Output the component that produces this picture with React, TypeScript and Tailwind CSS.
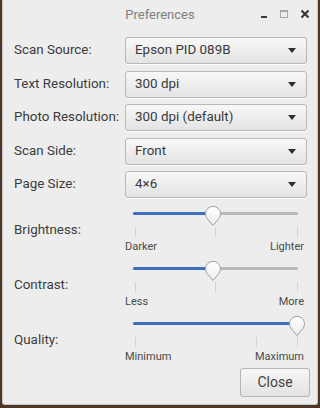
import React from 'react';

const font = { fontFamily: 'Roboto, "Liberation Sans", sans-serif' };

function Combo({ value }: { value: string }) {
  return (
    <div className="flex h-[27px] w-[182px] items-center justify-between rounded-[3px] border border-[#b8b8b8] bg-gradient-to-b from-[#f8f8f8] to-[#e3e3e3] pl-[9px] pr-[10px] text-[13.4px] text-[#3a3a3a] shadow-[0_1px_0_rgba(255,255,255,0.8)]">
      <span>{value}</span>
      <svg width="8" height="5" viewBox="0 0 8 5">
        <path d="M0 0 H8 L4 5 Z" fill="#2e2e2e" />
      </svg>
    </div>
  );
}

function Slider({ value, ticks, low, high }: { value: number; ticks: number[]; low: string; high: string }) {
  return (
    <div className="relative h-[50px] w-[182px]">
      {/* track */}
      <div className="absolute left-[8px] right-[9px] top-[7px] h-[3px] rounded-full bg-[#b9b9b9]" />
      <div
        className="absolute left-[8px] top-[7px] h-[3px] rounded-full bg-[#3f6fc0]"
        style={{ width: `${value * 164}px` }}
      />
      {ticks.map((t) => (
        <div
          key={t}
          className="absolute top-[22px] h-[10px] w-px bg-[#d2d2d2]"
          style={{ left: `${t}px` }}
        />
      ))}
      {/* thumb */}
      <svg
        className="absolute top-[0px]"
        style={{ left: `${8 + value * 164 - 9}px` }}
        width="18"
        height="22"
        viewBox="0 0 18 22"
      >
        <defs>
          <linearGradient id={`g-${low}`} x1="0" y1="0" x2="0" y2="1">
            <stop offset="0" stopColor="#ffffff" />
            <stop offset="1" stopColor="#ececec" />
          </linearGradient>
        </defs>
        <path
          d="M9 20.5 L3.2 13.6 A7.5 7.5 0 1 1 14.8 13.6 Z"
          fill={`url(#g-${low})`}
          stroke="#9f9f9f"
          strokeWidth="1"
        />
      </svg>
      <div className="absolute left-0 right-[3px] top-[34px] flex justify-between text-[11px] text-[#4a4a4a]">
        <span>{low}</span>
        <span>{high}</span>
      </div>
    </div>
  );
}

export default function App() {
  const combos = [
    ['Scan Source:', 'Epson PID 089B'],
    ['Text Resolution:', '300 dpi'],
    ['Photo Resolution:', '300 dpi (default)'],
    ['Scan Side:', 'Front'],
    ['Page Size:', '4×6'],
  ];
  const sliders = [
    { label: 'Brightness:', value: 0.49, ticks: [10, 90, 172], low: 'Darker', high: 'Lighter' },
    { label: 'Contrast:', value: 0.49, ticks: [10, 90, 172], low: 'Less', high: 'More' },
    { label: 'Quality:', value: 1, ticks: [10, 131, 172], low: 'Minimum', high: 'Maximum' },
  ];

  return (
    <div className="h-[408px] w-[320px] bg-[#4b3628] px-[2px] pb-[3px]" style={font}>
      <div className="flex h-full flex-col rounded-b-[3px] border border-t-0 border-[#c9c9c9] bg-[#ededed]">
        {/* Title bar */}
        <div className="relative flex h-[30px] items-center justify-center">
          <span className="text-[13px] text-[#808080]">Preferences</span>
          <div className="absolute right-[7px] top-[8px] flex items-center gap-[12px]">
            <svg width="8" height="12" viewBox="0 0 8 12">
              <rect x="1" y="8" width="6" height="2" fill="#3a3a3a" />
            </svg>
            <svg width="8" height="12" viewBox="0 0 8 12">
              <rect x="0.5" y="2.5" width="7" height="7" fill="none" stroke="#a8a8a8" />
              <rect x="0.5" y="2.5" width="7" height="1.5" fill="#a8a8a8" />
            </svg>
            <svg width="10" height="12" viewBox="0 0 10 12">
              <path d="M1.5 2.5 L8.5 9.5 M8.5 2.5 L1.5 9.5" stroke="#333" strokeWidth="2" />
            </svg>
          </div>
        </div>

        <div className="flex flex-col pl-[11px] pr-[10px] pt-[7px]">
          <div className="flex flex-col gap-[6.5px]">
            {combos.map(([label, value]) => (
              <div key={label} className="flex items-center justify-between">
                <span className="text-[13.4px] text-[#3c3c3c]">{label}</span>
                <Combo value={value} />
              </div>
            ))}
          </div>

          <div className="mt-[7px] flex flex-col gap-[5px]">
            {sliders.map((s) => (
              <div key={s.label} className="flex justify-between">
                <span className="pt-[15px] text-[13.4px] text-[#3c3c3c]">{s.label}</span>
                <Slider value={s.value} ticks={s.ticks} low={s.low} high={s.high} />
              </div>
            ))}
          </div>

          <div className="mr-[-3px] mt-[3px] flex justify-end">
            <button className="h-[29px] w-[70px] rounded-[3px] border border-[#b5b5b5] bg-gradient-to-b from-[#f7f7f7] to-[#e2e2e2] text-[14px] text-[#444]">
              Close
            </button>
          </div>
        </div>
      </div>
    </div>
  );
}
